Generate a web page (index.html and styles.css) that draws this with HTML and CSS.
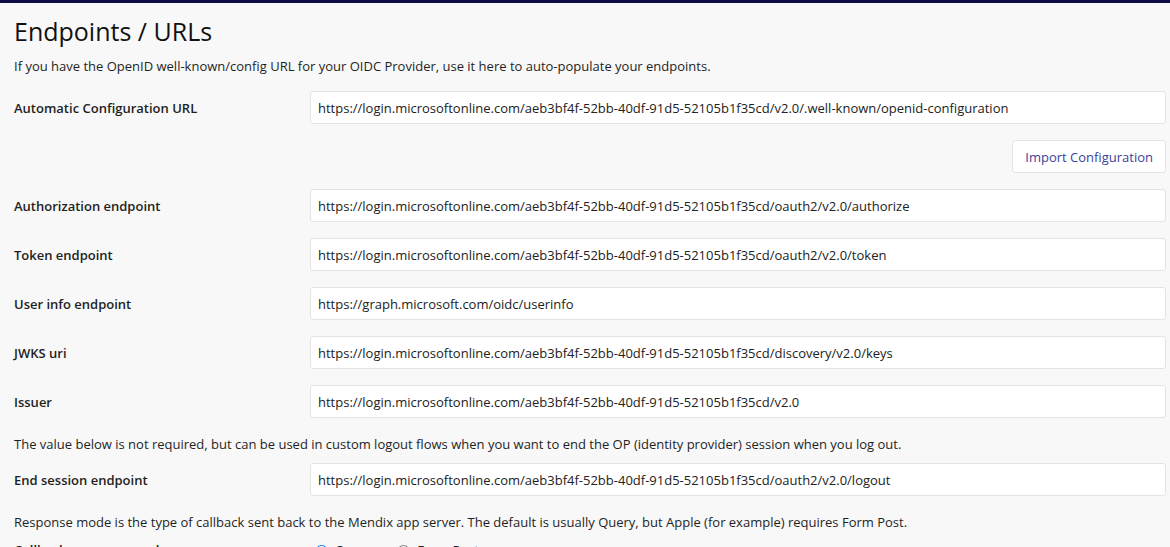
FILE: index.html
```html
<!DOCTYPE html>
<html lang="en">
<head>
  <meta charset="UTF-8" />
  <meta name="viewport" content="width=device-width, initial-scale=1.0" />
  <title>Endpoints / URLs</title>
  <link rel="stylesheet" href="styles.css">
</head>
<body>
  <div class="page">
    <h2>Endpoints / URLs</h2>
    <p class="help intro">If you have the OpenID well-known/config URL for your OIDC Provider, use it here to auto-populate your endpoints.</p>

    <div class="row">
      <label for="autoconf">Automatic Configuration URL</label>
      <input type="text" id="autoconf" value="https://login.microsoftonline.com/aeb3bf4f-52bb-40df-91d5-52105b1f35cd/v2.0/.well-known/openid-configuration" />
    </div>

    <div class="actions">
      <button>Import Configuration</button>
    </div>

    <div class="row">
      <label for="authz">Authorization endpoint</label>
      <input type="text" id="authz" value="https://login.microsoftonline.com/aeb3bf4f-52bb-40df-91d5-52105b1f35cd/oauth2/v2.0/authorize" />
    </div>

    <div class="row">
      <label for="token">Token endpoint</label>
      <input type="text" id="token" value="https://login.microsoftonline.com/aeb3bf4f-52bb-40df-91d5-52105b1f35cd/oauth2/v2.0/token" />
    </div>

    <div class="row">
      <label for="userinfo">User info endpoint</label>
      <input type="text" id="userinfo" value="https://graph.microsoft.com/oidc/userinfo" />
    </div>

    <div class="row">
      <label for="jwks">JWKS uri</label>
      <input type="text" id="jwks" value="https://login.microsoftonline.com/aeb3bf4f-52bb-40df-91d5-52105b1f35cd/discovery/v2.0/keys" />
    </div>

    <div class="row">
      <label for="issuer">Issuer</label>
      <input type="text" id="issuer" value="https://login.microsoftonline.com/aeb3bf4f-52bb-40df-91d5-52105b1f35cd/v2.0" />
    </div>

    <p class="help">The value below is not required, but can be used in custom logout flows when you want to end the OP (identity provider) session when you log out.</p>

    <div class="row">
      <label for="endsession">End session endpoint</label>
      <input type="text" id="endsession" value="https://login.microsoftonline.com/aeb3bf4f-52bb-40df-91d5-52105b1f35cd/oauth2/v2.0/logout" />
    </div>

    <p class="help">Response mode is the type of callback sent back to the Mendix app server. The default is usually Query, but Apple (for example) requires Form Post.</p>

    <div class="row">
      <label>Callback response mode</label>
      <div class="radios">
        <span class="radio"><input type="radio" name="mode" checked /> Query</span>
        <span class="radio"><input type="radio" name="mode" /> Form Post</span>
      </div>
    </div>
  </div>
</body>
</html>
```

FILE: styles.css
```css
:root {
  --navy: #0b0b45;
  --background: #f8f8f8;
  --text: #1f1f1f;
  --border: #e4e4e4;
  --link: #3c3f99;
}

html, body {
  margin: 0;
  height: 100%;
  overflow: hidden;
}

body {
  font-family: 'Open Sans', 'Noto Sans', sans-serif;
  font-size: 13px;
  color: var(--text);
  background-color: var(--background);
  border-top: 3px solid var(--navy);
}

.page {
  padding: 12px 4px 0 14px;
}

h2 {
  font-size: 25px;
  font-weight: 400;
  color: #111;
  margin: 0 0 9px;
  line-height: 32px;
}

.help {
  margin: 0 0 9px;
  line-height: 20px;
}

.help.intro {
  margin-bottom: 15px;
}

.row {
  display: flex;
  align-items: center;
  margin-bottom: 16px;
}

.row label {
  width: 296px;
  flex-shrink: 0;
  font-weight: 600;
}

.row input[type="text"] {
  flex: 1;
  height: 33px;
  box-sizing: border-box;
  padding: 0 7px;
  border: 1px solid var(--border);
  border-radius: 3px;
  background-color: #fff;
  font-family: inherit;
  font-size: 13px;
  color: #222;
}

.actions {
  display: flex;
  justify-content: flex-end;
  margin: 0 0 16px;
}

.actions button {
  height: 33px;
  padding: 0 12px;
  border: 1px solid var(--border);
  border-radius: 3px;
  background-color: #fff;
  color: var(--link);
  font-family: inherit;
  font-size: 13px;
}

.radios {
  display: flex;
  gap: 20px;
}

.radio {
  display: flex;
  align-items: center;
  gap: 4px;
}
```
